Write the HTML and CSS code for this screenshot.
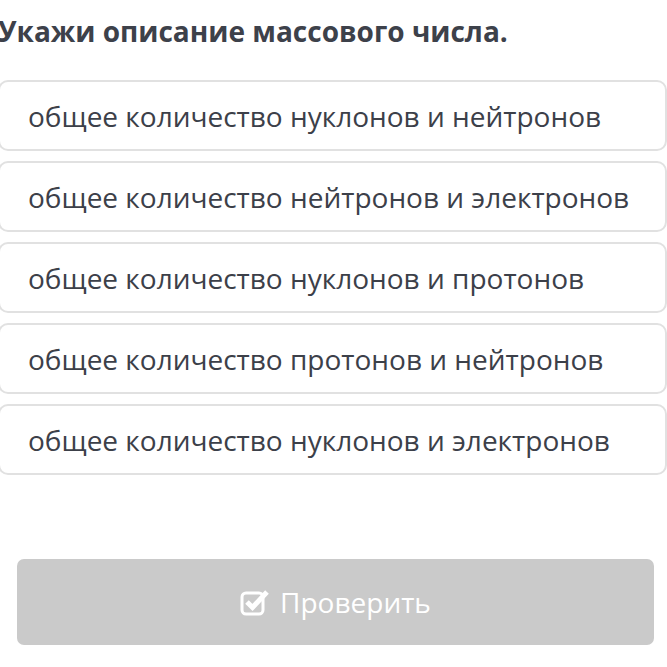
FILE: index.html
```html
<!DOCTYPE html>
<html lang="ru">
<head>
<meta charset="utf-8">
<link rel="stylesheet" href="styles.css">
</head>
<body>
<div class="quiz">
  <h1 class="question">Укажи описание массового числа.</h1>
  <div class="options">
    <div class="option">общее количество нуклонов и нейтронов</div>
    <div class="option">общее количество нейтронов и электронов</div>
    <div class="option">общее количество нуклонов и протонов</div>
    <div class="option">общее количество протонов и нейтронов</div>
    <div class="option">общее количество нуклонов и электронов</div>
  </div>
  <div class="actions">
    <button class="check-btn">
      <svg class="check-icon" viewBox="0 0 30 28" width="30" height="28">
        <rect x="2" y="5" width="21" height="21" rx="4" fill="none" stroke="#fff" stroke-width="3"/>
        <path d="M7 14 L12.5 19.5 L27 4" fill="none" stroke="#fff" stroke-width="5" stroke-linecap="butt" stroke-linejoin="miter"/>
      </svg>
      <span>Проверить</span>
    </button>
  </div>
</div>
</body>
</html>
```

FILE: styles.css
```css
html, body {
  margin: 0;
  padding: 0;
  background: #fff;
}
body {
  font-family: "Open Sans", "Noto Sans", sans-serif;
  color: #3c4049;
  overflow: hidden;
}
.quiz {
  margin-left: -2px;
  width: 669px;
}
.question {
  margin: 12px 0 0 0;
  font-size: 28px;
  line-height: 38px;
  font-weight: 700;
  color: #3d414a;
  white-space: nowrap;
}
.options {
  margin-top: 30px;
  display: flex;
  flex-direction: column;
  gap: 10px;
}
.option {
  height: 67px;
  border: 2px solid #e1e1e1;
  border-radius: 10px;
  display: flex;
  align-items: center;
  padding-left: 28px;
  font-size: 28px;
  color: #3c4049;
  white-space: nowrap;
}
.actions {
  margin-top: 84px;
  padding-left: 19px;
}
.check-btn {
  width: 637px;
  height: 86px;
  border: none;
  border-radius: 7px;
  background: #cacaca;
  color: #fff;
  font-family: "Open Sans", "Noto Sans", sans-serif;
  font-size: 28px;
  display: flex;
  align-items: center;
  justify-content: center;
  gap: 10px;
  padding: 0;
}
.check-icon {
  display: block;
}
```
